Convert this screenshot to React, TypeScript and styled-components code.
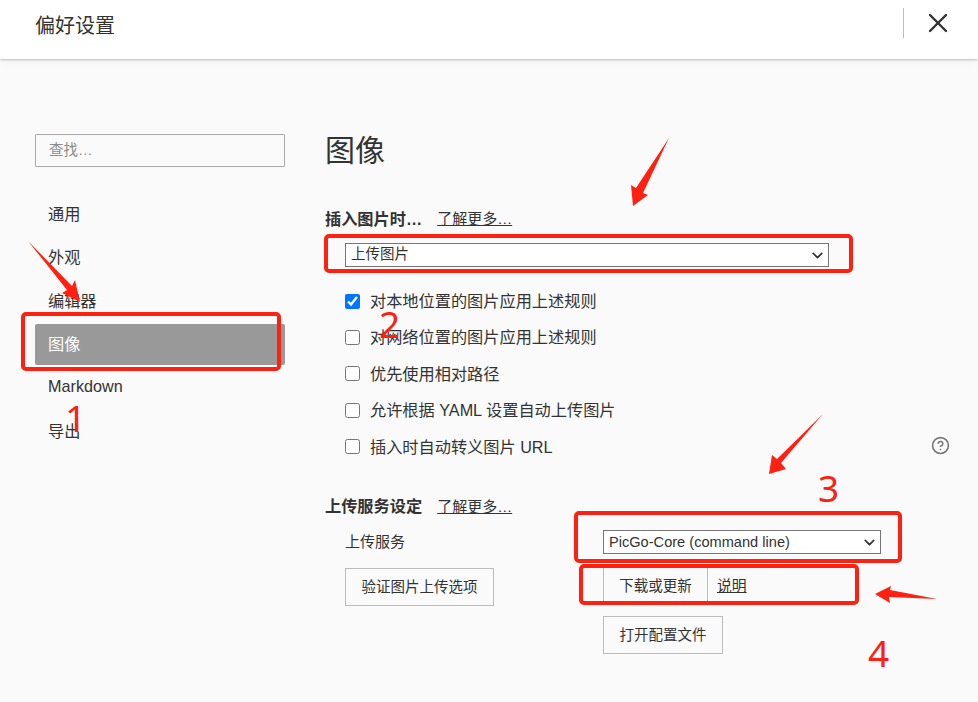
import React from 'react';
import styled, { createGlobalStyle } from 'styled-components';
import { ChevronDown, CircleHelp, X } from 'lucide-react';

const GlobalStyle = createGlobalStyle`
  html, body {
    margin: 0;
    padding: 0;
    height: 702px;
    overflow: hidden;
    background: #fafafa;
  }
  * {
    box-sizing: border-box;
  }
  body {
    font-family: "Liberation Sans", "Noto Sans CJK SC", sans-serif;
    color: #333;
  }
`;

const navItems = ['通用', '外观', '编辑器', '图像', 'Markdown', '导出'];
const imageRules = [
  { label: '对本地位置的图片应用上述规则', checked: true },
  { label: '对网络位置的图片应用上述规则', checked: false },
  { label: '优先使用相对路径', checked: false },
  { label: '允许根据 YAML 设置自动上传图片', checked: false },
  { label: '插入时自动转义图片 URL', checked: false, help: true },
];

const marks = [
  { left: 21, top: 312, width: 260, height: 59 },
  { left: 324, top: 234, width: 529, height: 39 },
  { left: 574, top: 511, width: 328, height: 52 },
  { left: 579, top: 564, width: 280, height: 41 },
];

const numbers = [
  { text: '1', left: 65, top: 396 },
  { text: '2', left: 379, top: 302 },
  { text: '3', left: 818, top: 466 },
  { text: '4', left: 868, top: 631 },
];

const arrows = [
  '28,241 72,286 75,280 80,302 62,293 67,290',
  '669,138 643,193 648,195 633,206 631,185 636,188',
  '823,414 781,463 786,469 769,474 772,455 777,459',
  '937,599 889,597 890,603 875,594 891,586 890,590',
];

const App: React.FC = () => {
  return (
    <Page>
      <GlobalStyle />
      <Header>
        <HeaderTitle>偏好设置</HeaderTitle>
        <HeaderDivider />
        <CloseButton>
          <X size={32} strokeWidth={1.8} />
        </CloseButton>
      </Header>

      <Body>
        <Sidebar>
          <SearchInput placeholder="查找…" />
          <NavList>
            {navItems.map((item) => (
              <NavItem key={item} $active={item === '图像'}>
                {item}
              </NavItem>
            ))}
          </NavList>
        </Sidebar>

        <Main>
          <PageTitle>图像</PageTitle>

          <SectionHeading>
            <strong>插入图片时…</strong>
            <MoreLink>了解更多…</MoreLink>
          </SectionHeading>
          <InsertSelect>
            <Select defaultValue="upload" $small>
              <option value="upload">上传图片</option>
            </Select>
            <Chevron size={17} strokeWidth={2.4} />
          </InsertSelect>

          <RuleList>
            {imageRules.map((rule) => (
              <Rule key={rule.label}>
                <Checkbox type="checkbox" defaultChecked={rule.checked} />
                <RuleText>{rule.label}</RuleText>
                {rule.help && (
                  <HelpIcon>
                    <CircleHelp size={19} strokeWidth={2} />
                  </HelpIcon>
                )}
              </Rule>
            ))}
          </RuleList>

          <ServiceHeading>
            <strong>上传服务设定</strong>
            <MoreLink>了解更多…</MoreLink>
          </ServiceHeading>

          <ServiceGrid>
            <ServiceLabel>上传服务</ServiceLabel>
            <ServiceSelect>
              <Select defaultValue="core">
                <option value="core">PicGo-Core (command line)</option>
              </Select>
              <Chevron size={17} strokeWidth={2.4} />
            </ServiceSelect>

            <Button $width={149}>验证图片上传选项</Button>
            <ButtonStack>
              <ButtonGroup>
                <Button $width={105}>下载或更新</Button>
                <DocLink>说明</DocLink>
              </ButtonGroup>
              <Button $width={120}>打开配置文件</Button>
            </ButtonStack>
          </ServiceGrid>
        </Main>
      </Body>

      {/* screenshot annotations drawn on top of the window */}
      {marks.map((mark) => (
        <MarkBox key={mark.left} style={mark} />
      ))}
      <ArrowLayer viewBox="0 0 978 702">
        {arrows.map((points) => (
          <polygon key={points} points={points} fill="#fe2010" />
        ))}
      </ArrowLayer>
      {numbers.map((n) => (
        <MarkNumber key={n.text} style={{ left: n.left, top: n.top }}>
          {n.text}
        </MarkNumber>
      ))}
    </Page>
  );
};

const Page = styled.div`
  position: relative;
  width: 978px;
  height: 702px;
  overflow: hidden;
  background: #fafafa;
`;

const Header = styled.header`
  display: flex;
  align-items: center;
  height: 59px;
  padding: 0 24px 8px 35px;
  background: #fff;
  box-shadow: 0 1px 2px rgba(0, 0, 0, 0.22), 0 2px 12px rgba(0, 0, 0, 0.04);
`;

const HeaderTitle = styled.h1`
  flex: 1;
  margin: 0;
  font-size: 20px;
  font-weight: 400;
  line-height: 28px;
  color: #333;
`;

const HeaderDivider = styled.div`
  width: 1px;
  height: 30px;
  margin-bottom: 6px;
  background: #bbb;
`;

const CloseButton = styled.div`
  display: flex;
  align-items: center;
  justify-content: center;
  width: 32px;
  height: 32px;
  margin: 0 0 5px 18px;
  color: #333;
`;

const Body = styled.div`
  display: flex;
`;

const Sidebar = styled.aside`
  width: 250px;
  margin-left: 35px;
  padding-top: 75px;
`;

const SearchInput = styled.input`
  display: block;
  width: 100%;
  height: 33px;
  padding: 0 13px 2px;
  border: 1px solid #a9a9a9;
  border-radius: 1px;
  background: transparent;
  font: inherit;
  font-size: 14.5px;
  outline: none;

  &::placeholder {
    color: #8a8a8a;
  }
`;

const NavList = styled.nav`
  display: flex;
  flex-direction: column;
  gap: 2.5px;
  margin-top: 26.5px;
`;

const NavItem = styled.div<{ $active?: boolean }>`
  display: flex;
  align-items: center;
  height: 41px;
  padding: 0 0 3px 13px;
  border-radius: 2px;
  font-size: 16.2px;
  color: ${(p) => (p.$active ? '#fff' : '#333')};
  background: ${(p) => (p.$active ? '#999' : 'transparent')};
`;

const Main = styled.main`
  flex: 1;
  margin-left: 40px;
  padding: 72px 28px 0 0;
`;

const PageTitle = styled.h2`
  margin: 0;
  padding-top: 1px;
  font-size: 30px;
  font-weight: 400;
  line-height: 37px;
  color: #333;
`;

const SectionHeading = styled.div`
  display: flex;
  align-items: center;
  gap: 15px;
  height: 20px;
  margin-top: 40px;
  padding-bottom: 3px;
  font-size: 16.2px;

  strong {
    font-weight: 700;
  }
`;

const ServiceHeading = styled(SectionHeading)`
  margin-top: 40px;
`;

const MoreLink = styled.span`
  font-size: 15px;
  color: #333;
  text-decoration: underline;
`;

const InsertSelect = styled.div`
  position: relative;
  width: 484px;
  height: 24px;
  margin: 14px 0 0 20px;
`;

const ServiceSelect = styled.div`
  position: relative;
  width: 278px;
  height: 24px;
`;

const Select = styled.select<{ $small?: boolean }>`
  display: block;
  width: 100%;
  height: 100%;
  padding: 0 24px ${(p) => (p.$small ? '2px' : '0')} 5px;
  border: 1px solid #767676;
  border-radius: 0;
  background: #fff;
  font: inherit;
  font-size: ${(p) => (p.$small ? '14.5px' : '14.6px')};
  color: #333;
  appearance: none;
  outline: none;
`;

const Chevron = styled(ChevronDown)`
  position: absolute;
  top: 4px;
  right: 3px;
  color: #333;
  pointer-events: none;
`;

const RuleList = styled.div`
  display: flex;
  flex-direction: column;
  gap: 16.4px;
  margin: 24px 0 0 20px;
`;

const Rule = styled.label`
  display: flex;
  align-items: center;
  height: 20px;
  font-size: 16.2px;
  color: #333;
`;

const RuleText = styled.span`
  padding-bottom: 2px;
`;

const Checkbox = styled.input`
  width: 15px;
  height: 15px;
  margin: 0 10px 0 0;
  accent-color: #0075ff;
`;

const HelpIcon = styled.span`
  display: flex;
  margin: 0 0 3px auto;
  color: #777;
`;

const ServiceGrid = styled.div`
  display: grid;
  grid-template-columns: 258px 278px;
  grid-template-rows: 24px auto;
  row-gap: 14px;
  align-items: start;
  margin: 13px 0 0 20px;
`;

const ServiceLabel = styled.div`
  font-size: 15px;
  line-height: 24px;
`;

const ButtonStack = styled.div`
  display: flex;
  flex-direction: column;
  gap: 11px;
  margin-top: -1px;
`;

const ButtonGroup = styled.div`
  display: flex;
  align-items: center;
  height: 38px;
`;

const Button = styled.button<{ $width: number }>`
  width: ${(p) => p.$width}px;
  height: 38px;
  padding: 0 0 2px;
  border: 1px solid #bbb;
  border-radius: 0;
  background: transparent;
  font: inherit;
  font-size: 14.5px;
  color: #333;
`;

const DocLink = styled.span`
  margin-left: 9px;
  padding-bottom: 2px;
  font-size: 14.8px;
  text-decoration: underline;
`;

const MarkBox = styled.div`
  position: absolute;
  border: 4px solid #fe2010;
  border-radius: 5px;
  pointer-events: none;
`;

const ArrowLayer = styled.svg`
  position: absolute;
  left: 0;
  top: 0;
  width: 978px;
  height: 702px;
  pointer-events: none;
`;

const MarkNumber = styled.div`
  position: absolute;
  font-family: "Noto Sans", sans-serif;
  font-size: 37px;
  line-height: 44px;
  color: #fe2010;
  pointer-events: none;
`;

export default App;
